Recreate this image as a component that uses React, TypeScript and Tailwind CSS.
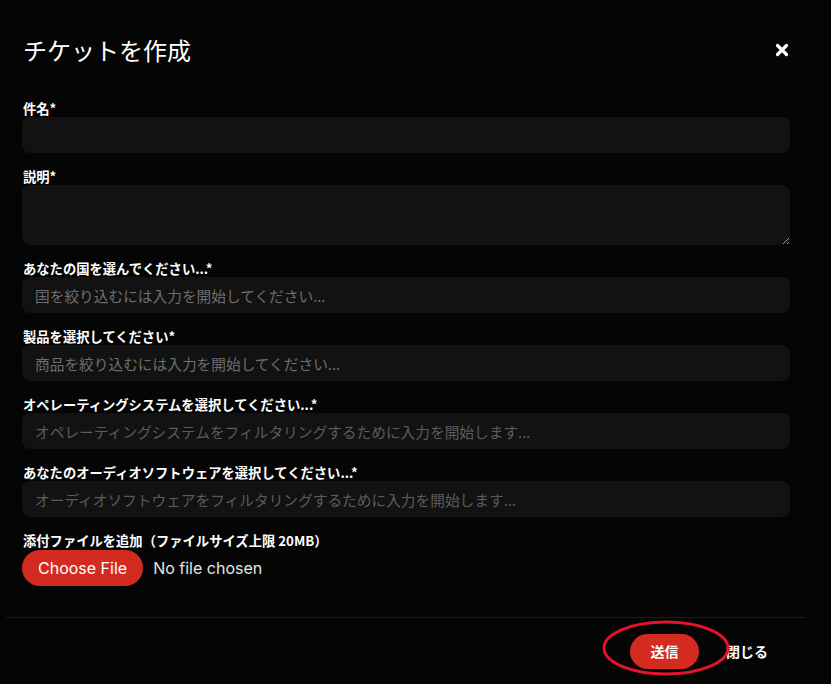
const jp = "font-['Noto_Sans_CJK_JP','Noto_Sans',sans-serif]";

type Field = {
  label: string;
  placeholder?: string;
  dim?: boolean;
  area?: boolean;
};

const fields: Field[] = [
  { label: "件名*" },
  { label: "説明*", area: true },
  { label: "あなたの国を選んでください...*", placeholder: "国を絞り込むには入力を開始してください..." },
  { label: "製品を選択してください*", placeholder: "商品を絞り込むには入力を開始してください..." },
  {
    label: "オペレーティングシステムを選択してください...*",
    placeholder: "オペレーティングシステムをフィルタリングするために入力を開始します...",
    dim: true,
  },
  {
    label: "あなたのオーディオソフトウェアを選択してください...*",
    placeholder: "オーディオソフトウェアをフィルタリングするために入力を開始します...",
    dim: true,
  },
];

function CloseIcon() {
  return (
    <svg width="14" height="14" viewBox="0 0 14 14" className="text-white">
      <path d="M2.5 2.5 L11.5 11.5 M11.5 2.5 L2.5 11.5" stroke="currentColor" strokeWidth="3.2" strokeLinecap="round" />
    </svg>
  );
}

export default function App() {
  return (
    <div className={`h-[684px] w-full overflow-hidden bg-[#050505] ${jp}`}>
      <div className="ml-[6px] w-[800px]">
        {/* header */}
        <div className="flex items-center justify-between pl-[17px] pr-[16px] pt-[32px] pb-[33px]">
          <h1 className="text-[24px] leading-[36px] font-normal text-white">チケットを作成</h1>
          <button className="mr-[1px] flex h-[14px] w-[14px] items-center justify-center">
            <CloseIcon />
          </button>
        </div>

        {/* form */}
        <div className="flex flex-col gap-4 px-4">
          {fields.map((f) => (
            <div key={f.label} className="flex flex-col">
              <label className="pl-[1px] text-[13.3px] leading-[16px] font-bold text-white">{f.label}</label>
              {f.area ? (
                <textarea className="h-[60px] w-full resize-y rounded-lg bg-[#121212] px-3 py-2 text-[14px] text-white outline-none" />
              ) : (
                <input
                  className={`h-[36px] w-full rounded-lg bg-[#121212] pl-[13px] text-[14.7px] text-white outline-none ${
                    f.dim ? "placeholder:text-[#5c5c5c]" : "placeholder:text-[#6e6e6e]"
                  }`}
                  placeholder={f.placeholder}
                />
              )}
            </div>
          ))}

          <div className="flex flex-col">
            <label className="pl-[1px] text-[13.3px] leading-[16px] font-bold text-white">
              添付ファイルを追加（ファイルサイズ上限 20MB）
            </label>
            <div className="flex items-center gap-[10px] pt-[1px]">
              <button className="h-[36px] rounded-full bg-[#d42b20] px-4 font-['Inter',sans-serif] text-[16px] text-white">
                Choose File
              </button>
              <span className="font-['Inter',sans-serif] text-[16px] text-[#e6e6e6]">No file chosen</span>
            </div>
          </div>
        </div>

        {/* footer */}
        <div className="mt-[31px] flex items-center justify-end border-t border-[#1a1a1a] pt-4 pr-[38px]">
          <div className="relative">
            <button className="h-[35px] w-[69px] rounded-full bg-[#d42b20] text-[14px] font-bold text-white">送信</button>
            <svg className="pointer-events-none absolute -top-[14px] -left-[28px]" width="128" height="56" viewBox="0 0 128 56">
              <ellipse cx="64" cy="28" rx="62" ry="26" fill="none" stroke="#e5122a" strokeWidth="3" />
            </svg>
          </div>
          <button className="ml-[27px] text-[14px] font-bold text-white">閉じる</button>
        </div>
      </div>
    </div>
  );
}
